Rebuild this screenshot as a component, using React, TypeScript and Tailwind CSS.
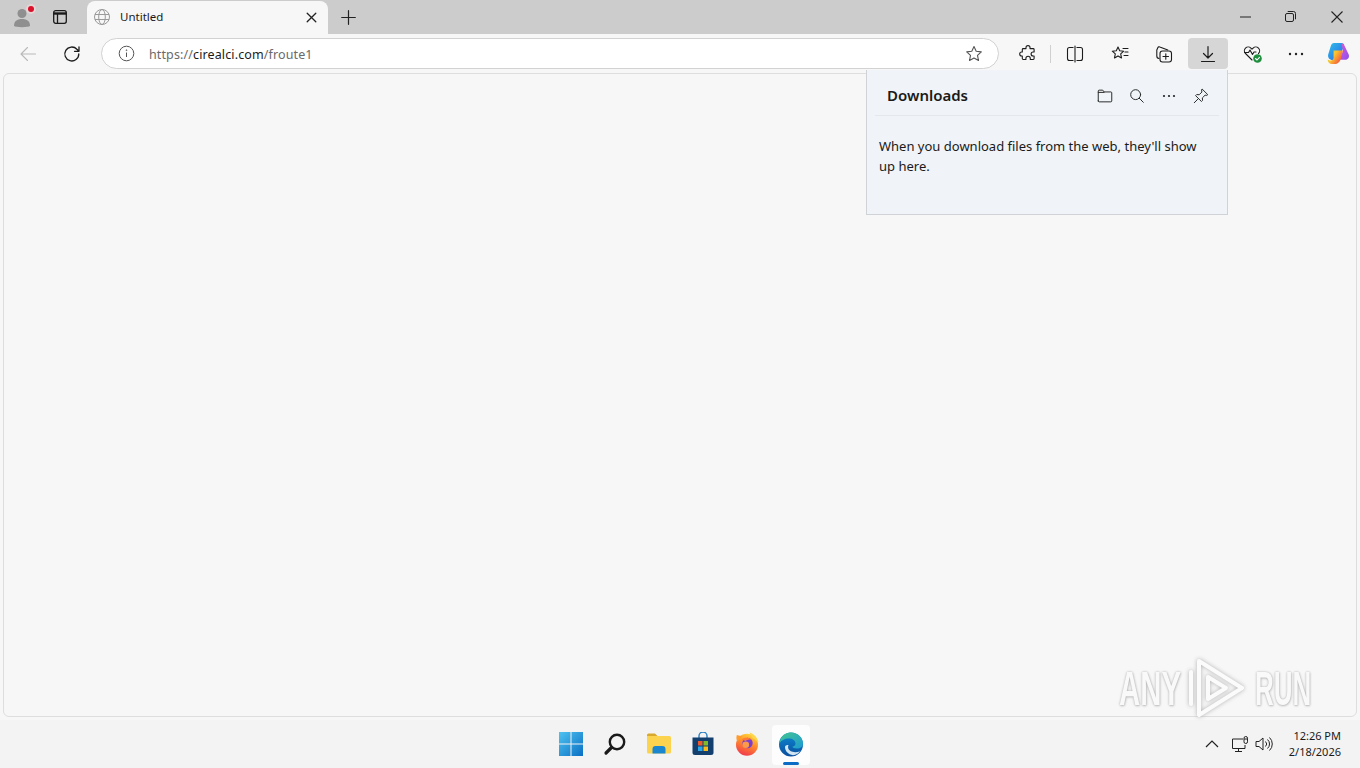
import React from "react";

const S = ({ size = 20, children, box = 20, sw = 1.1, cls = "" }: { size?: number; children: React.ReactNode; box?: number; sw?: number; cls?: string }) => (
  <svg width={size} height={size} viewBox={`0 0 ${box} ${box}`} fill="none" stroke="currentColor" strokeWidth={sw} strokeLinecap="round" strokeLinejoin="round" className={cls}>
    {children}
  </svg>
);

const Btn = ({ children, w = "w-[44px]", cls = "" }: { children: React.ReactNode; w?: string; cls?: string }) => (
  <div className={`${w} h-[30px] flex items-center justify-center shrink-0 text-[#1c1c1c] ${cls}`}>{children}</div>
);

const Extension = () => (
  <S><path d="M8 3.600a2 2 0 0 1 4 0v1h3.200a.9.9 0 0 1 .9.9V8h-1a2 2 0 0 0 0 4h1v2.600a.9.9 0 0 1-.9.9H12.300v-1a2.200 2.200 0 0 0-4.400 0v1H5.200a.9.9 0 0 1-.9-.9V12h-.6a2 2 0 0 1 0-4h.6V5.500a.9.9 0 0 1 .9-.9H8z" /></S>
);

const Star = ({ cls = "" }: { cls?: string }) => (
  <S cls={cls}><path d="M10 2.600l2.200 4.700 5.100.6-3.800 3.500 1 5.100L10 14l-4.500 2.500 1-5.100-3.800-3.500 5.100-.6z" /></S>
);

export default function App() {
  return (
    <div className="h-[768px] w-[1360px] overflow-hidden flex flex-col bg-[#f7f7f7] relative font-['Noto_Sans','Open_Sans',sans-serif] text-[#1a1a1a]">
      {/* Tab strip */}
      <div className="h-[34px] bg-[#cccccc] flex items-end shrink-0">
        <div className="w-[44px] h-[34px] flex items-center justify-center relative shrink-0">
          <svg width="22" height="22" viewBox="0 0 22 22">
            <circle cx="11" cy="7.500" r="4.500" fill="#8f8f8f" />
            <path d="M3 20c0-5 3-7 8-7s8 2 8 7c-1.500 1.500-14.500 1.500-16 0z" fill="#8f8f8f" />
          </svg>
          <span className="absolute left-[28px] top-[6px] w-[6px] h-[6px] rounded-full bg-[#d9112b] ring-2 ring-[#e6d5d5]" />
        </div>
        <div className="w-[32px] h-[34px] flex items-center justify-center shrink-0">
          <svg width="14" height="14" viewBox="0 0 14 14" fill="none" stroke="#1a1a1a" strokeWidth="1.300">
            <rect x="0.700" y="0.700" width="12.600" height="12.600" rx="2" />
            <path d="M0.700 3.500h12.600" strokeWidth="2.400" />
            <path d="M4.500 4v9" />
          </svg>
        </div>
        <div className="w-[11px] shrink-0" />
        <div className="w-[241px] h-[33px] bg-[#f7f7f7] rounded-t-[8px] flex items-center pl-[6px] pr-[11px] pb-[1px] shrink-0">
          <svg width="18" height="18" viewBox="0 0 18 18" fill="none" stroke="#9a9a9a" strokeWidth="1">
            <circle cx="9" cy="9" r="7.500" />
            <ellipse cx="9" cy="9" rx="3.300" ry="7.500" />
            <path d="M2 6.500h14M2 11.500h14" />
          </svg>
          <span className="ml-[9px] text-[11.5px] leading-none flex-1">Untitled</span>
          <svg width="11" height="11" viewBox="0 0 11 11" stroke="#222" strokeWidth="1.300" strokeLinecap="round">
            <path d="M1.200 1.200l8.600 8.600M9.800 1.200l-8.600 8.600" />
          </svg>
        </div>
        <div className="w-[41px] h-[34px] flex items-center justify-center shrink-0">
          <svg width="15" height="15" viewBox="0 0 15 15" stroke="#222" strokeWidth="1.200" strokeLinecap="round">
            <path d="M7.500 0.700v13.600M0.700 7.500h13.600" />
          </svg>
        </div>
        <div className="flex-1" />
        <div className="w-[46px] h-[34px] flex items-center justify-center pb-[1px]">
          <svg width="11" height="2" stroke="#222"><path d="M0 1h11" /></svg>
        </div>
        <div className="w-[46px] h-[34px] flex items-center justify-center pb-[1px] pr-[1px]">
          <svg width="11" height="11" viewBox="0 0 11 11" fill="none" stroke="#222" strokeWidth="1">
            <rect x="0.500" y="2.500" width="8" height="8" rx="1.500" />
            <path d="M2.700 0.500h5.800a2 2 0 0 1 2 2v5.800" />
          </svg>
        </div>
        <div className="w-[46px] h-[34px] flex items-center justify-center pb-[1px]">
          <svg width="12" height="12" viewBox="0 0 12 12" stroke="#222" strokeWidth="1.100">
            <path d="M0.500 0.500l11 11M11.500 0.500l-11 11" />
          </svg>
        </div>
      </div>

      {/* Toolbar */}
      <div className="h-[39px] flex items-center pl-[6px] shrink-0">
        <Btn cls="text-[#b9b9b9]">
          <S><path d="M17.500 10H3M9.500 3.500L3 10l6.500 6.500" /></S>
        </Btn>
        <Btn>
          <S sw={1.300}><path d="M16.800 10a7 7 0 1 1-1.900-4.800L17 7.300M17 2.800v4.500h-4.500" /></S>
        </Btn>
        <div className="w-[7px] shrink-0" />
        <div className="w-[898px] h-[31px] rounded-full bg-white border border-[#d2d2d2] flex items-center pl-[16px] pr-[14px] shrink-0">
          <svg width="17" height="17" viewBox="0 0 17 17" fill="none" stroke="#555" strokeWidth="1">
            <circle cx="8.500" cy="8.500" r="7.300" />
            <path d="M8.500 7.500v4.500" />
            <circle cx="8.500" cy="5.200" r="0.400" />
          </svg>
          <span className="ml-[14px] pt-[3px] text-[12.5px] tracking-[0.12px] flex-1 text-[#6a6a6a]">
            https://<span className="text-[#1a1a1a]">cirealci.com</span>/froute1
          </span>
          <div className="text-[#555]"><Star /></div>
        </div>
        <div className="w-[7px] shrink-0" />
        <Btn><Extension /></Btn>
        <div className="w-px h-[18px] bg-[#d0d0d0] shrink-0" />
        <Btn w="w-[47px]">
          <S><rect x="2.500" y="3.500" width="15" height="13" rx="2" /><path d="M10 1.800v16.400" stroke="#f7f7f7" strokeWidth="3" /><path d="M10 2v16" /></S>
        </Btn>
        <Btn>
          <S><path d="M8 3l1.700 3.700 4 .5-3 2.700.8 4-3.500-2-3.500 2 .8-4-3-2.700 4-.5zM13 4.500h5M15 8h3M14 11.500h4" /></S>
        </Btn>
        <Btn>
          <S><path d="M5 14.500A2.500 2.500 0 0 1 2.800 12V6l1-2.300a1.500 1.500 0 0 1 2-.8l8 3" /><rect x="6" y="7" width="11.500" height="11" rx="2.500" /><path d="M11.800 9.800v5.400M9 12.500h5.500" /></S>
        </Btn>
        <Btn cls="bg-[#d6d6d6] rounded-[4px] h-[31px]" w="w-[40px] mx-[2px]">
          <S sw={1.200}><path d="M10 2.500v11M5.500 9.500l4.500 4.500 4.500-4.500M3.500 17.500h13" /></S>
        </Btn>
        <Btn cls="pl-[2px]">
          <svg width="22" height="22" viewBox="0 0 22 22" fill="none" stroke="#1c1c1c" strokeWidth="1.100" strokeLinejoin="round" strokeLinecap="round">
            <path d="M10 17L3.500 10.500a3.800 3.800 0 0 1 5.400-5.400L10 6.200l1.100-1.100a3.800 3.800 0 0 1 5.400 5.400" />
            <path d="M2.500 9.500h4l1.500-2.500 2.500 4.500 1.500-2.500h2" />
            <circle cx="15.500" cy="15.500" r="4.300" fill="#1e8f3e" stroke="none" />
            <path d="M13.500 15.500l1.500 1.500 2.500-2.700" stroke="#fff" />
          </svg>
        </Btn>
        <Btn>
          <svg width="16" height="4" viewBox="0 0 16 4" fill="#222"><circle cx="2" cy="2" r="1.200" /><circle cx="8" cy="2" r="1.200" /><circle cx="14" cy="2" r="1.200" /></svg>
        </Btn>
        <Btn w="w-[40px]" cls="pl-[1px]">
          <svg width="23" height="23" viewBox="0 0 23 23">
            <defs>
              <linearGradient id="cp1" x1="0" y1="0" x2="1" y2="1"><stop offset="0" stopColor="#2fc0e8" /><stop offset="1" stopColor="#2a62e6" /></linearGradient>
              <linearGradient id="cp2" x1="0" y1="0" x2="1" y2="1"><stop offset="0" stopColor="#e25bd2" /><stop offset="1" stopColor="#8a4fee" /></linearGradient>
              <linearGradient id="cp3" x1="0" y1="0" x2="1" y2="0.600"><stop offset="0" stopColor="#8fd65a" /><stop offset="0.450" stopColor="#fbc52f" /><stop offset="1" stopColor="#f2503f" /></linearGradient>
            </defs>
            <path d="M7 1h7.500c1.500 0 2.300.8 2.700 2L14 12l-4 6H5.500C2.500 18 .5 15.500 1.200 12.500L3.800 4C4.400 2 5.500 1 7 1z" fill="url(#cp1)" />
            <path d="M14.500 1.500c1.500 0 2.500.8 3 2.200l4.300 9c.8 2.500-.8 5-3.400 5H12L16 9z" fill="url(#cp2)" />
            <path d="M6.500 8.500h9.500L14 16c-.8 3.500-3 6-6 6H5c-2.700 0-4.300-2-4.300-4.500 1.200 1 2.800 1.300 4 .8 1-.4 1.600-1.200 1.900-2.300z" fill="url(#cp3)" />
          </svg>
        </Btn>
        <div className="flex-1" />
      </div>

      {/* Content viewport */}
      <div className="flex-1 min-h-0 px-[3px] pb-[3px]">
        <div className="h-full rounded-[6px] border border-[#dedede] bg-[#f7f7f7]" />
      </div>

      {/* Taskbar */}
      <div className="h-[48px] bg-[#f3f3f4] flex items-center shrink-0 relative">
        <div className="w-[549px] shrink-0" />
        <div className="w-[44px] flex justify-center">
          <svg width="24" height="24" viewBox="0 0 24 24">
            <defs>
              <linearGradient id="w11" x1="0" y1="0" x2="1" y2="1"><stop offset="0" stopColor="#4fc3f0" /><stop offset="1" stopColor="#0a6fc4" /></linearGradient>
            </defs>
            <path d="M0 0h11.500v11.500H0zM12.500 0H24v11.500H12.500zM0 12.500h11.500V24H0zM12.500 12.500H24V24H12.500z" fill="url(#w11)" />
          </svg>
        </div>
        <div className="w-[44px] flex justify-center">
          <svg width="24" height="24" viewBox="0 0 24 24" fill="none" stroke="#1a1a1a" strokeLinecap="round">
            <circle cx="14" cy="10" r="7.200" strokeWidth="2.400" />
            <path d="M8.500 15.500L3 21" strokeWidth="3.200" />
          </svg>
        </div>
        <div className="w-[44px] flex justify-center">
          <svg width="24" height="24" viewBox="0 0 24 24">
            <path d="M0 3a1.500 1.500 0 0 1 1.500-1.500h6.500L10.500 4H0z" fill="#d9a82e" />
            <path d="M0 4h22.500a1.500 1.500 0 0 1 1.500 1.500V20a1.500 1.500 0 0 1-1.500 1.500h-21A1.500 1.500 0 0 1 0 20z" fill="#fbd34f" />
            <path d="M5.500 21.500V17a3 3 0 0 1 3-3h7a3 3 0 0 1 3 3v4.500z" fill="#1a86d0" />
          </svg>
        </div>
        <div className="w-[44px] flex justify-center">
          <svg width="24" height="24" viewBox="0 0 24 24">
            <path d="M8 6V4a4 4 0 0 1 8 0v2" fill="none" stroke="#2a7fc4" strokeWidth="1.400" />
            <path d="M1.500 5.500h21v15a2.500 2.500 0 0 1-2.500 2.500H4a2.500 2.500 0 0 1-2.500-2.500z" fill="#123f6e" />
            <rect x="7" y="9" width="4.500" height="4.500" fill="#ef5a2b" />
            <rect x="12.500" y="9" width="4.500" height="4.500" fill="#7fba2a" />
            <rect x="7" y="14.500" width="4.500" height="4.500" fill="#2ba6e8" />
            <rect x="12.500" y="14.500" width="4.500" height="4.500" fill="#fbbc15" />
          </svg>
        </div>
        <div className="w-[44px] flex justify-center">
          <svg width="24" height="24" viewBox="0 0 24 24">
            <defs>
              <linearGradient id="ff" x1="0.700" y1="0" x2="0.300" y2="1"><stop offset="0" stopColor="#ffd93a" /><stop offset="0.450" stopColor="#ff8a2b" /><stop offset="1" stopColor="#f0364f" /></linearGradient>
            </defs>
            <circle cx="12" cy="12.800" r="11" fill="url(#ff)" />
            <path d="M1.800 3c-.7 2.700-.4 5 .6 6.500l5-5z" fill="#ff9a2e" />
            <path d="M14.500.5c4 1.200 7.500 4.500 9 9.500l-6-4z" fill="#ffd54a" />
            <circle cx="12.500" cy="11" r="5.200" fill="#7b3fd0" />
            <circle cx="10.800" cy="12.800" r="3.300" fill="#fb9b4a" />
            <path d="M6.500 7.500c3-2.500 7.500-2.500 10 0-2 0-5 0-6 1.500z" fill="#ff7a35" />
          </svg>
        </div>
        <div className="w-[38px] h-[40px] ml-[3px] mt-[1px] rounded-[4px] bg-white/80 relative flex items-center justify-center">
          <svg width="26" height="26" viewBox="0 0 26 26">
            <defs>
              <linearGradient id="edg" x1="0" y1="0" x2="1" y2="1"><stop offset="0" stopColor="#43c78e" /><stop offset="1" stopColor="#1d9ad6" /></linearGradient>
              <linearGradient id="edb" x1="0" y1="0" x2="0" y2="1"><stop offset="0" stopColor="#0c8ad4" /><stop offset="1" stopColor="#0a4f9e" /></linearGradient>
            </defs>
            <circle cx="13" cy="12.500" r="12" fill="url(#edb)" />
            <path d="M2.500 7C5 2.500 9 .5 13 .5c7 0 12 5.500 12 11 0 3-2.500 5-6 5-3 0-4.500-1-4.500-2 1.500 0 3-1 3-3 0-3-3-5-6.500-5-4 0-8.500 2-9.500 5z" fill="url(#edg)" />
            <path d="M7 15c0 4 3 7.500 8 8.200 3-.3 5.500-1.800 7-4-3 1.300-7 1.300-9.500-.2-2.500-1.500-3-4-2-6-2 0-3.500.5-3.500 2z" fill="#e8f4fb" opacity="0.900" />
          </svg>
          <span className="absolute bottom-[0px] left-[11px] w-[16px] h-[3px] rounded-full bg-[#0a6cc4]" />
        </div>
        <div className="flex-1" />
        <div className="w-[32px] flex justify-center">
          <svg width="14" height="8" viewBox="0 0 14 8" fill="none" stroke="#222" strokeWidth="1.200"><path d="M1 7l6-6 6 6" /></svg>
        </div>
        <div className="w-[24px] flex justify-center">
          <svg width="18" height="17" viewBox="0 0 18 17" fill="none" stroke="#222" strokeWidth="1">
            <path d="M12 3H1.500v9.500H14V9M7.500 12.500v3M4 15.500h7" />
            <rect x="13" y="0.500" width="3.500" height="7" rx="1.700" />
            <path d="M13 3h3.500" />
          </svg>
        </div>
        <div className="w-[24px] flex justify-center">
          <svg width="18" height="16" viewBox="0 0 18 16" fill="none" stroke="#222" strokeWidth="1">
            <path d="M1 5.500v5h3l4 3.500V2L4 5.500zM10.500 5.500a3.500 3.500 0 0 1 0 5M12.500 3.500a6 6 0 0 1 0 9M14.500 1.500a9 9 0 0 1 0 13" />
          </svg>
        </div>
        <div className="w-[65px] text-right text-[#1a1a1a] text-[11px] leading-[16px]">
          <div>12:26 PM</div>
          <div>2/18/2026</div>
        </div>
        <div className="w-[19px] shrink-0" />
      </div>

      {/* Downloads flyout */}
      <div className="absolute left-[866px] top-[70px] w-[362px] h-[145px] bg-[#f0f3f7] border border-[#cfd2d6] border-t-0 flex flex-col">
        <div className="mx-[8px] h-[46px] pt-[6px] border-b border-[#e4e7ec] flex items-center pl-[12px] pr-[8px] shrink-0">
          <span className="font-semibold text-[15px] flex-1 text-[#1a1a1a]">Downloads</span>
          <div className="flex items-center gap-[14px] text-[#2b2b2b] -translate-x-px">
            <S size={18}><path d="M2.500 15.500v-11a1 1 0 0 1 1-1h4l1.500 2h7.500a1 1 0 0 1 1 1v9a1 1 0 0 1-1 1h-13a1 1 0 0 1-1-1zM2.500 6h6.500" /></S>
            <S size={18}><circle cx="8.500" cy="8.500" r="5.500" /><path d="M12.500 12.500L17 17" /></S>
            <svg width="18" height="18" viewBox="0 0 18 18" fill="#222"><circle cx="4" cy="9" r="1.100" /><circle cx="9" cy="9" r="1.100" /><circle cx="14" cy="9" r="1.100" /></svg>
            <S size={18}><path d="M11.500 2.500l6 6-1 .8-2-.2-3 3 .2 2.800-1.200 1.200-6.500-6.500 1.200-1.200 2.800.2 3-3-.3-2zM6.500 13.500L2.500 17.500" /></S>
          </div>
        </div>
        <p className="mx-[12px] mt-[20px] text-[13px] leading-[20px] text-[#1a1a1a]">When you download files from the web, they'll show up here.</p>
      </div>

      {/* Watermark */}
      <div className="absolute left-[1119px] top-[658px] flex items-center h-[60px] text-[#f9f9f9] [text-shadow:0_0_3px_#b0b0b0,1px_1px_3px_#c4c4c4] font-['Liberation_Sans',sans-serif] font-bold text-[49px] leading-none">
        <span className="block w-[67px] whitespace-nowrap origin-left scale-x-[0.6]">ANY</span>
        <svg width="60" height="62" viewBox="0 0 60 62" fill="none" stroke="#fbfbfb" strokeWidth="4" strokeLinejoin="round" strokeLinecap="round" className="drop-shadow-[0_0_2px_#b0b0b0] shrink-0">
          <path d="M5 15v32" />
          <path d="M13 4l43 27-43 27z" />
          <path d="M22 20l18 11-18 11z" />
        </svg>
        <span className="block w-[60px] ml-[9px] whitespace-nowrap origin-left scale-x-[0.53]">RUN</span>
      </div>
    </div>
  );
}
